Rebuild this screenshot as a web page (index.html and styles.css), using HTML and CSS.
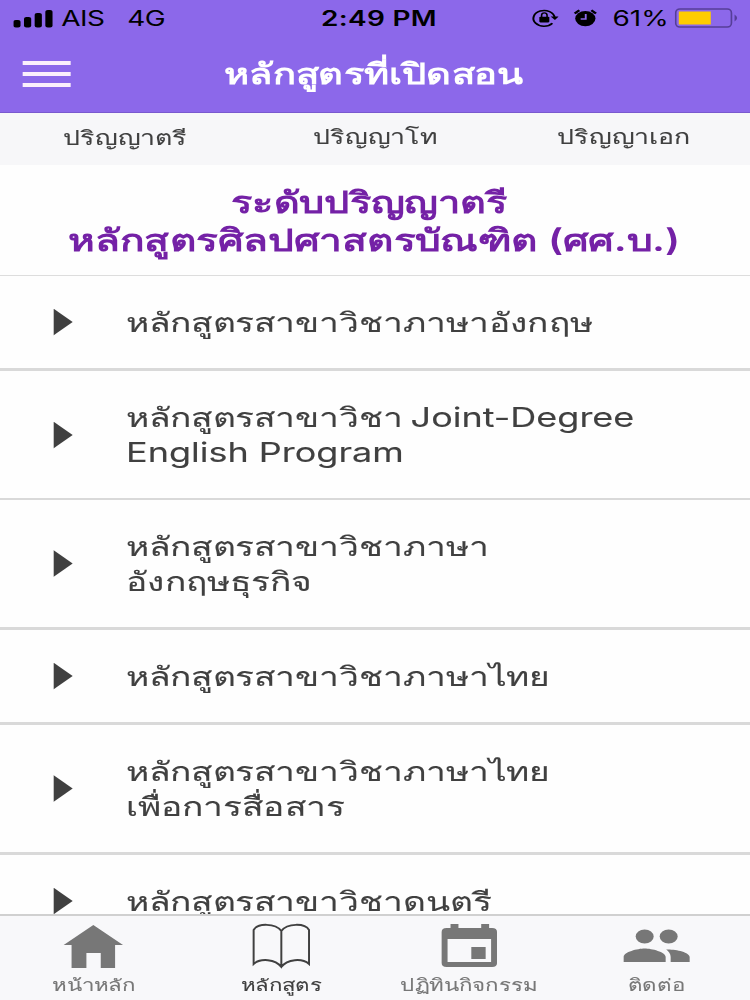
FILE: index.html
```html
<!doctype html>
<html lang="th">
<head>
<meta charset="utf-8">
<meta name="viewport" content="width=device-width, initial-scale=1.0">
<link rel="stylesheet" href="styles.css">
<title>หลักสูตรที่เปิดสอน</title>
</head>
<body>
<div class="app">

<header class="header">
<div class="status">
<div class="status-left">
<svg class="signal" width="30" height="19" viewBox="0 0 30 19"><rect x="0" y="11" width="5.4" height="7.5" rx="1.8"/><rect x="8" y="8" width="5.4" height="10.5" rx="1.8"/><rect x="16" y="4" width="5.4" height="14.5" rx="1.8"/><rect x="24" y="1" width="5.4" height="17.5" rx="1.8"/></svg>
<span class="carrier">AIS</span>
<span class="network">4G</span>
</div>
<div class="clock">2:49 PM</div>
<div class="status-right">
<svg class="lock" width="20" height="20" viewBox="0 0 20 20"><path d="M15.3 15.3A8 7.9 0 1 1 17 9.5" fill="none" stroke="#000" stroke-width="1.5"/><path d="M14 8.4h6L17.2 12z"/><rect x="5.5" y="8.8" width="7.5" height="5.6" rx=".8"/><path d="M7.2 9.5V7.2a2 2.3 0 0 1 4.1 0V9.5" fill="none" stroke="#000" stroke-width="1.2"/></svg>
<svg class="alarm" width="18" height="18" viewBox="0 0 18 18"><circle cx="9" cy="9.6" r="7.6"/><path d="M1 4.5 4.5 1.3M17 4.5 13.5 1.3" stroke="#000" stroke-width="2"/><path d="M9.3 5v5H5.5" fill="none" stroke="#8c68ea" stroke-width="1.4"/></svg>
<span class="percent">61%</span>
<svg class="battery" width="48" height="20" viewBox="0 0 62 20" preserveAspectRatio="none"><rect x="1" y="1" width="54" height="18" rx="4" fill="none" stroke="#563e98" stroke-width="1.6"/><rect x="4" y="3.5" width="31" height="13" fill="#fc0"/><path d="M58 6.5q5 3.5 0 7z" fill="#563e98"/></svg>
</div>
</div>
<div class="title-bar">
<div class="menu"><i></i><i></i><i></i></div>
<h1>หลักสูตรที่เปิดสอน</h1>
</div>
</header>

<nav class="levels">
<a class="bachelor">ปริญญาตรี</a>
<a class="master">ปริญญาโท</a>
<a class="doctor">ปริญญาเอก</a>
</nav>

<h2><span class="heading-level">ระดับปริญญาตรี</span><br><span class="heading-degree">หลักสูตรศิลปศาสตรบัณฑิต (ศศ.บ.)</span></h2>

<ul class="courses">
<li><p>หลักสูตรสาขาวิชาภาษาอังกฤษ</p></li>
<li class="tall thin"><p>หลักสูตรสาขาวิชา <span class="latin">Joint-Degree</span><br><span class="latin">English Program</span></p></li>
<li class="tall"><p>หลักสูตรสาขาวิชาภาษา<br>อังกฤษธุรกิจ</p></li>
<li><p>หลักสูตรสาขาวิชาภาษาไทย</p></li>
<li class="tall"><p>หลักสูตรสาขาวิชาภาษาไทย<br>เพื่อการสื่อสาร</p></li>
<li><p>หลักสูตรสาขาวิชาดนตรี</p></li>
</ul>

<footer class="tabs">
<a class="tab home">
<svg width="46" height="46" viewBox="0 0 62 46" preserveAspectRatio="none"><path d="M31 2 61 22H53V45H38.5V30H24V45H9V22H1z"/></svg>
<span>หน้าหลัก</span>
</a>
<a class="tab course active">
<svg width="46" height="46" viewBox="0 0 62 46" preserveAspectRatio="none"><path d="M31 8C25 0 7 0 3 7V41C10 35 25 36 31 44C37 36 52 35 59 41V7C55 0 37 0 31 8ZM31 8V44" fill="none" stroke="#404040" stroke-width="2"/></svg>
<span>หลักสูตร</span>
</a>
<a class="tab calendar">
<svg width="46" height="46" viewBox="0 0 62 46" preserveAspectRatio="none"><path fill-rule="evenodd" d="M12 1h8v4h23V1h8v4h3q5 0 5 4V40q0 4-5 4H8q-5 0-5-4V9q0-4 5-4h4zM9 16V39H53V16z"/><path d="M33 24H47.5V36H33z"/></svg>
<span>ปฏิทินกิจกรรม</span>
</a>
<a class="tab contact">
<svg width="51" height="46" viewBox="0 0 68 46" preserveAspectRatio="none"><ellipse cx="22" cy="13.5" rx="9" ry="7"/><ellipse cx="46" cy="13.5" rx="9" ry="7"/><path d="M1 39V34C1 29 15 25.5 22 25.5S43 29 43 34V39zM43.5 26.5C52 26 67 29 67 34V39H48V34C48 31 46 28 43.5 26.5z"/></svg>
<span>ติดต่อ</span>
</a>
</footer>

</div>
</body>
</html>
```
FILE: styles.css
```css
* {
    box-sizing: border-box;
}
body, h1, h2, p, ul {
    margin: 0;
    padding: 0;
}
body {
    width: 750px;
    height: 1000px;
    overflow: hidden;
    background: #fefefe;
    color: #404040;
    font-family: Inter, sans-serif;
}
/* three quarter width canvas, stretched to fill the screen */
.app {
    display: flex;
    flex-direction: column;
    width: 562.5px;
    height: 1000px;
    transform: scaleX(1.33333);
    transform-origin: 0 0;
}
.header {
    height: 113px;
    flex: none;
    background: #8c68ea;
    border-bottom: 1px solid #7959cf;
}
.status {
    display: grid;
    grid-template-columns: 1fr auto 1fr;
    height: 36px;
    align-items: center;
    color: #000;
    font-size: 21px;
}
.status-left, .status-right {
    display: flex;
    align-items: center;
}
.status-left {
    padding-left: 10px;
}
.carrier {
    margin-left: 6px;
    letter-spacing: -.4px;
}
.network {
    margin-left: 17px;
    letter-spacing: -.4px;
}
.clock {
    padding-left: 6px;
    font-weight: 600;
    letter-spacing: .2px;
}
.status-right {
    justify-content: flex-end;
    padding-right: 9px;
}
.alarm {
    margin: 0 11px;
}
.percent {
    margin-right: 4px;
}
.title-bar {
    display: grid;
    grid-template-columns: 70px 1fr 70px;
    height: 76px;
    align-items: center;
}
.menu {
    display: grid;
    gap: 7px;
    width: 36px;
    margin-left: 17px;
}
.menu i {
    height: 4px;
    background: #fbeffc;
}
h1 {
    padding-right: 2px;
    color: #fff;
    font-size: 28.6px;
    line-height: 40px;
    font-weight: 600;
    text-align: center;
    white-space: nowrap;
}
.levels {
    display: grid;
    grid-template-columns: repeat(3, 1fr);
    flex: none;
    height: 52px;
    background: #f7f7f9;
    font-size: 20px;
    line-height: 49px;
    text-align: center;
    -webkit-text-stroke: .1px;
}
.bachelor {
    padding-top: 1px;
}
.doctor {
    padding-right: 2px;
}
h2 {
    flex: none;
    height: 111px;
    padding-top: 18px;
    border-bottom: 1px solid #ddd;
    color: #7421a6;
    font-size: 30.5px;
    line-height: 37px;
    font-weight: 600;
    text-align: center;
    white-space: nowrap;
}
.heading-level {
    padding-right: 9px;
    font-size: 29.8px;
}
.heading-degree {
    padding-right: 1px;
}
.courses {
    flex: 1;
    min-height: 0;
    overflow: hidden;
    list-style: none;
}
.courses li {
    display: flex;
    align-items: center;
    height: 95px;
    padding-left: 40px;
    border-bottom: 3px solid #d9d9d9;
    font-size: 26.5px;
    line-height: 35px;
    white-space: nowrap;
    -webkit-text-stroke: .12px;
}
.courses .tall {
    height: 130px;
}
.courses .thin {
    height: 129px;
    padding-top: 1px;
    border-bottom-width: 2px;
    word-spacing: -2px;
}
.courses li::before {
    content: "";
    width: 14.5px;
    height: 27px;
    margin-right: 40px;
    background: #404040;
    clip-path: polygon(0 0, 100% 50%, 0 100%);
}
.latin {
    font-size: 27px;
    word-spacing: 0;
}
.tabs {
    display: grid;
    grid-template-columns: repeat(4, 1fr);
    flex: none;
    height: 86px;
    border-top: 2px solid #d0d0d0;
    background: #f8f8fa;
}
.tab {
    display: flex;
    flex-direction: column;
    align-items: center;
    padding-top: 7px;
    color: #777;
    fill: #777;
    font-size: 16.7px;
    line-height: 32px;
    white-space: nowrap;
}
.tab span {
    -webkit-text-stroke: .1px;
}
.active {
    color: #404040;
}
```
